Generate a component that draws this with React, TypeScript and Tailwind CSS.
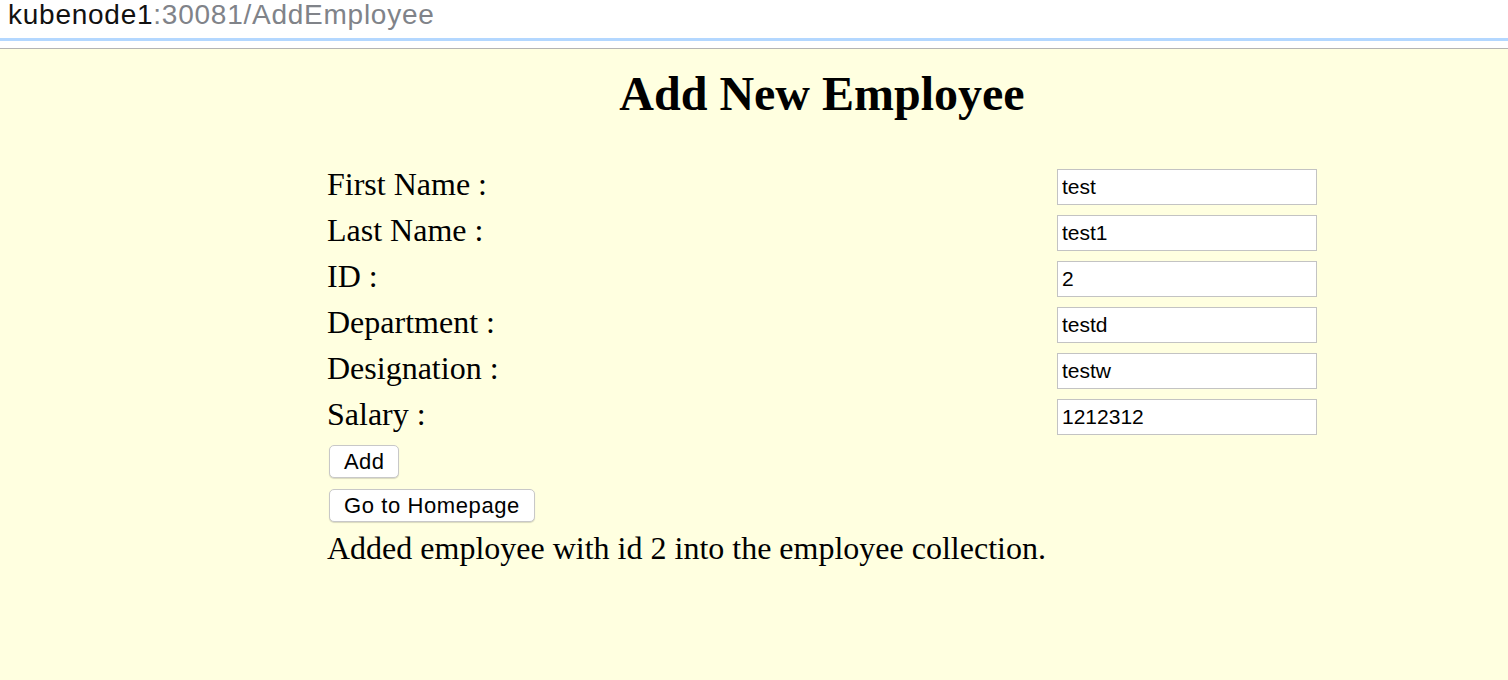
import React from "react";

const rows: [string, string][] = [
  ["First Name :", "test"],
  ["Last Name :", "test1"],
  ["ID :", "2"],
  ["Department :", "testd"],
  ["Designation :", "testw"],
  ["Salary :", "1212312"],
];

export default function App() {
  return (
    <div className="flex h-[680px] w-full flex-col overflow-hidden bg-white">
      <div className="h-[38px] bg-white pl-[8px] font-['Liberation_Sans',Arial,sans-serif] text-[28px] leading-[30px] tracking-[0.75px]">
        <span className="text-[#111]">kubenode1</span>
        <span className="text-[#808389]">:30081/AddEmployee</span>
      </div>
      <div className="h-[3px] bg-[#b3d7ff]" />
      <div className="h-[7px] bg-white" />
      <div className="h-px bg-[#b4b4b4]" />
      <div className="flex-1 bg-[#ffffe0] font-['Liberation_Serif','Times_New_Roman',serif] text-black">
        <div className="ml-[327px] w-[990px]">
          <h1 className="mt-[17px] text-center text-[48px] font-bold leading-[56px]">
            Add New Employee
          </h1>
          <div className="mt-[42px] flex flex-col">
            {rows.map(([label, value]) => (
              <div key={label} className="flex h-[46px] items-center justify-between">
                <span className="pb-[6px] text-[32px] leading-[37px]">{label}</span>
                <input
                  readOnly
                  value={value}
                  className="h-[36px] w-[260px] border border-[#c3c3c3] bg-white pl-[4px] font-['Liberation_Sans',Arial,sans-serif] text-[21px] text-black outline-none"
                />
              </div>
            ))}
          </div>
          <div className="mt-[5px] flex flex-col items-start gap-[11px] pl-[2px] font-['Liberation_Sans',Arial,sans-serif]">
            <button className="h-[33px] rounded-[5px] border border-[#c8c8c8] bg-white px-[14px] text-[22px] leading-[22px] tracking-[0.4px] text-black shadow-[0_1px_1px_rgba(0,0,0,0.15)]">
              Add
            </button>
            <button className="h-[33px] rounded-[5px] border border-[#c8c8c8] bg-white px-[14px] text-[22px] leading-[22px] tracking-[0.6px] text-black shadow-[0_1px_1px_rgba(0,0,0,0.15)]">
              Go to Homepage
            </button>
          </div>
          <p className="mt-[8px] text-[32px] leading-[37px]">
            Added employee with id 2 into the employee collection.
          </p>
        </div>
      </div>
    </div>
  );
}
